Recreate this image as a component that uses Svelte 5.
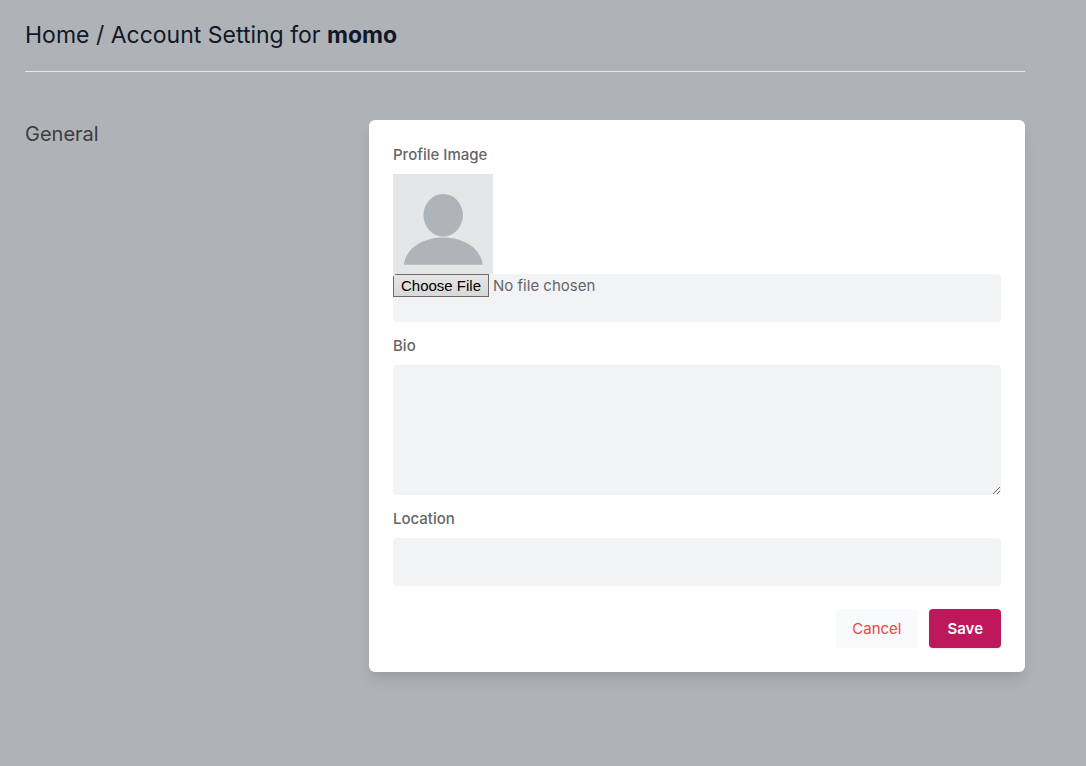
<script>
  let bio = $state('');
  let location = $state('');
</script>

<main>
  <header>
    <h1><a href="#home">Home</a> / Account Setting for <b>momo</b></h1>
  </header>
  <section class="settings">
    <h2>General</h2>
    <form onsubmit={(event) => event.preventDefault()}>
      <div class="field">
        <label for="image">Profile Image</label>
        <svg class="avatar" viewBox="0 0 100 100" role="img" aria-label="Profile">
          <rect width="100" height="100" fill="#e4e6e8" />
          <ellipse cx="50.2" cy="41.2" rx="19.7" ry="21.3" fill="#aeb4b8" />
          <path d="M10.8 90.8C12.5 75 29 63.6 50.2 63.6S88 75 89.7 90.8Z" fill="#aeb4b8" />
        </svg>
        <input id="image" class="control" type="file" />
      </div>
      <div class="field">
        <label for="bio">Bio</label>
        <textarea id="bio" class="control" bind:value={bio}></textarea>
      </div>
      <div class="field">
        <label for="location">Location</label>
        <input id="location" class="control" type="text" bind:value={location} />
      </div>
      <div class="actions">
        <a class="button cancel" href="#home">Cancel</a>
        <button class="button save" type="submit">Save</button>
      </div>
    </form>
  </section>
</main>

<style>
  :global(body) {
    margin: 0;
    background: #afb3b8;
  }
  main {
    box-sizing: border-box;
    max-width: 1061px;
    padding: 16px 36px 24px 25px;
    font-family: Inter, sans-serif;
    font-size: 15px;
    line-height: 22px;
    color: #666;
  }
  header {
    padding-bottom: 16px;
    border-bottom: 1px solid #e5e7eb;
  }
  h1,
  h2 {
    margin: 0;
    font-weight: 400;
  }
  h1 {
    font-size: 23px;
    line-height: 39px;
    color: #111827;
  }
  h1 a {
    color: inherit;
    text-decoration: none;
  }
  h1 b {
    font-weight: 700;
  }
  h2 {
    font-size: 20px;
    line-height: 28px;
    color: #3d3d3d;
  }
  .settings {
    display: grid;
    grid-template-columns: repeat(3, minmax(0, 1fr));
    gap: 32px;
    margin-top: 48px;
  }
  form {
    grid-column: span 2;
    display: flex;
    flex-direction: column;
    gap: 13px;
    padding: 24px;
    border-radius: 6px;
    background: #fff;
    box-shadow:
      0 10px 15px -3px rgb(0 0 0 / 10%),
      0 4px 6px -2px rgb(0 0 0 / 5%);
  }
  .field {
    display: flex;
    flex-direction: column;
  }
  label {
    margin-bottom: 8px;
    font-weight: 500;
  }
  .avatar {
    display: block;
    width: 100px;
    height: 100px;
  }
  .control {
    box-sizing: border-box;
    width: 100%;
    height: 48px;
    margin: 0;
    padding: 0 12px;
    border: 0;
    border-radius: 4px;
    background: #f2f3f5;
    font: inherit;
    color: inherit;
  }
  input[type='file'] {
    padding: 0;
  }
  input[type='file']::file-selector-button {
    box-sizing: border-box;
    height: 23px;
    margin: 0 4px 0 0;
    padding: 0 7px;
    border: 1px solid #6b6b6b;
    border-radius: 0;
    background: linear-gradient(#e6e6e6, #d8d8d8);
    font-family: 'Liberation Sans', Arial, sans-serif;
    font-size: 15px;
    line-height: 21px;
    color: #000;
  }
  textarea.control {
    display: block;
    height: 130px;
    padding: 8px 12px;
    resize: vertical;
  }
  .actions {
    display: flex;
    justify-content: flex-end;
    gap: 12px;
    margin-top: 10px;
  }
  .button {
    padding: 8px 16px;
    border: 0;
    border-radius: 4px;
    font: inherit;
    line-height: 23px;
    text-decoration: none;
    cursor: pointer;
  }
  .cancel {
    background: #f9fafb;
    color: #ef4444;
  }
  .save {
    padding: 8px 18px;
    background: #be185d;
    color: #fff;
    font-weight: 600;
    box-shadow: 0 1px 2px rgb(0 0 0 / 10%);
  }
</style>
